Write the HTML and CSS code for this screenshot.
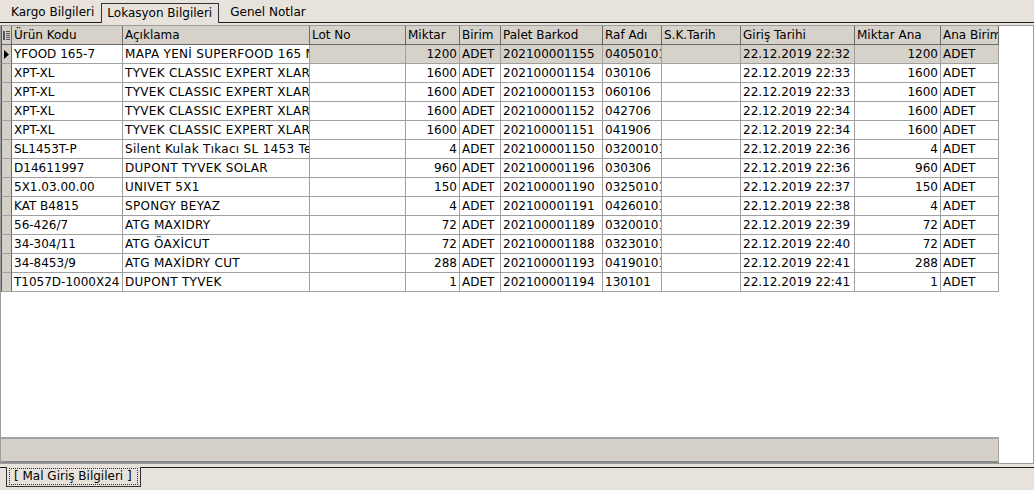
FILE: index.html
```html
<!DOCTYPE html>
<html lang="tr">
	<head>
	<meta charset="UTF-8" />
	<title>Lokasyon Bilgileri</title>
	<link rel="stylesheet" href="styles.css">
	</head>
	<body>
		<div class="tabs top">
			<span class="tab">Kargo Bilgileri</span>
			<span class="tab active">Lokasyon Bilgileri</span>
			<span class="tab">Genel Notlar</span>
		</div>
		<div class="grid">
			<table>
				<colgroup>
					<col style="width:11px"><col style="width:111px"><col style="width:187px"><col style="width:96px">
					<col style="width:54px"><col style="width:41px"><col style="width:102px"><col style="width:59px">
					<col style="width:79px"><col style="width:114px"><col style="width:86px"><col style="width:58px">
				</colgroup>
				<thead>
					<tr>
						<th class="ind">
							<svg width="7" height="9" viewBox="0 0 7 9"><rect x="0" y="0" width="2" height="9" fill="#555"/><path d="M3 0.5h4M3 2.5h4M3 4.5h4M3 6.5h4M3 8.5h4" stroke="#555" stroke-width="1"/></svg>
						</th>
						<th>Ürün Kodu</th><th>Açıklama</th><th>Lot No</th><th>Miktar</th><th>Birim</th><th>Palet Barkod</th><th>Raf Adı</th><th>S.K.Tarih</th><th>Giriş Tarihi</th><th>Miktar Ana</th><th>Ana Birim</th>
					</tr>
				</thead>
				<tbody>
					<tr class="current">
						<td class="ind"><svg width="5" height="9" viewBox="0 0 5 9"><polygon points="0,0 5,4.5 0,9" fill="#000"/></svg></td>
						<td class="w">YFOOD 165-7</td><td class="w desc">MAPA YENİ SUPERFOOD 165 MAVİ</td><td></td><td class="num">1200</td><td>ADET</td><td>202100001155</td><td>040501011</td><td></td><td>22.12.2019 22:32</td><td class="num">1200</td><td>ADET</td>
					</tr>
					<tr><td class="ind"></td><td>XPT-XL</td><td class="desc">TYVEK CLASSIC EXPERT XLARGE</td><td></td><td class="num">1600</td><td>ADET</td><td>202100001154</td><td>030106</td><td></td><td>22.12.2019 22:33</td><td class="num">1600</td><td>ADET</td></tr>
					<tr><td class="ind"></td><td>XPT-XL</td><td class="desc">TYVEK CLASSIC EXPERT XLARGE</td><td></td><td class="num">1600</td><td>ADET</td><td>202100001153</td><td>060106</td><td></td><td>22.12.2019 22:33</td><td class="num">1600</td><td>ADET</td></tr>
					<tr><td class="ind"></td><td>XPT-XL</td><td class="desc">TYVEK CLASSIC EXPERT XLARGE</td><td></td><td class="num">1600</td><td>ADET</td><td>202100001152</td><td>042706</td><td></td><td>22.12.2019 22:34</td><td class="num">1600</td><td>ADET</td></tr>
					<tr><td class="ind"></td><td>XPT-XL</td><td class="desc">TYVEK CLASSIC EXPERT XLARGE</td><td></td><td class="num">1600</td><td>ADET</td><td>202100001151</td><td>041906</td><td></td><td>22.12.2019 22:34</td><td class="num">1600</td><td>ADET</td></tr>
					<tr><td class="ind"></td><td>SL1453T-P</td><td class="desc">Silent Kulak Tıkacı SL 1453 Test</td><td></td><td class="num">4</td><td>ADET</td><td>202100001150</td><td>032001011</td><td></td><td>22.12.2019 22:36</td><td class="num">4</td><td>ADET</td></tr>
					<tr><td class="ind"></td><td>D14611997</td><td class="desc">DUPONT TYVEK SOLAR</td><td></td><td class="num">960</td><td>ADET</td><td>202100001196</td><td>030306</td><td></td><td>22.12.2019 22:36</td><td class="num">960</td><td>ADET</td></tr>
					<tr><td class="ind"></td><td>5X1.03.00.00</td><td class="desc">UNIVET 5X1</td><td></td><td class="num">150</td><td>ADET</td><td>202100001190</td><td>032501011</td><td></td><td>22.12.2019 22:37</td><td class="num">150</td><td>ADET</td></tr>
					<tr><td class="ind"></td><td>KAT B4815</td><td class="desc">SPONGY BEYAZ</td><td></td><td class="num">4</td><td>ADET</td><td>202100001191</td><td>042601011</td><td></td><td>22.12.2019 22:38</td><td class="num">4</td><td>ADET</td></tr>
					<tr><td class="ind"></td><td>56-426/7</td><td class="desc">ATG MAXIDRY</td><td></td><td class="num">72</td><td>ADET</td><td>202100001189</td><td>032001011</td><td></td><td>22.12.2019 22:39</td><td class="num">72</td><td>ADET</td></tr>
					<tr><td class="ind"></td><td>34-304/11</td><td class="desc">ATG ÖAXİCUT</td><td></td><td class="num">72</td><td>ADET</td><td>202100001188</td><td>032301011</td><td></td><td>22.12.2019 22:40</td><td class="num">72</td><td>ADET</td></tr>
					<tr><td class="ind"></td><td>34-8453/9</td><td class="desc">ATG MAXİDRY CUT</td><td></td><td class="num">288</td><td>ADET</td><td>202100001193</td><td>041901011</td><td></td><td>22.12.2019 22:41</td><td class="num">288</td><td>ADET</td></tr>
					<tr><td class="ind"></td><td>T1057D-1000X24</td><td class="desc">DUPONT TYVEK</td><td></td><td class="num">1</td><td>ADET</td><td>202100001194</td><td>130101</td><td></td><td>22.12.2019 22:41</td><td class="num">1</td><td>ADET</td></tr>
				</tbody>
			</table>
			<div class="filler"></div>
			<div class="footer">
				<div class="sumbar"></div>
			</div>
		</div>
		<div class="tabs bottom">
			<span class="tab active"><span class="focus">[ Mal Giriş Bilgileri ]</span></span>
		</div>
	</body>
</html>
```

FILE: styles.css
```css
* { box-sizing: border-box; }
html { font-family: "DejaVu Sans", Verdana, sans-serif; font-size: 12px; }
body { margin: 0; background-color: #e7e3dc; color: #000; width: 1034px; height: 490px; overflow: hidden; }

.tabs { display: flex; }
.tabs.top { height: 23px; align-items: flex-end; border-bottom: 1px solid #1e1e1e; padding-left: 5px; }
.tabs.top .tab { height: 19px; line-height: 18px; padding: 0 7px 0 6px; }
.tabs.top .tab.active { height: 20px; margin-bottom: -1px; border: 1px solid #333; border-bottom: none; background: #e7e3dc; padding: 0 6px 0 5px; }
.tabs.top .tab.active + .tab { padding-left: 11px; }

.grid { margin-top: 2px; height: 439px; background: #fff; border: 1px solid #9c9c9c; display: flex; flex-direction: column; }
.grid table { border-collapse: separate; border-spacing: 0; table-layout: fixed; width: 998px; }
.grid th, .grid td { height: 19px; padding: 0 2px; white-space: nowrap; overflow: hidden; text-align: left; font-weight: normal; border-right: 1px solid #a0a0a0; border-bottom: 1px solid #a0a0a0; line-height: 18px; }
.grid th { background: #d6d2ca; border-right-color: #6a6a6a; border-bottom-color: #6a6a6a; }
.grid td.num { text-align: right; }
.grid td.desc { letter-spacing: 0.3px; }
.grid .ind { padding: 0; background: #d4d0c8; border-right-color: #6a6a6a; border-left: 1px solid #555; text-align: center; }
.grid .ind svg { display: block; margin: 0 auto; }
.grid tr.current td { background: #d6d2ca; }
.grid tr.current td.w { background: #fff; }
.grid tr.current td.ind { background: #d4d0c8; }

.filler { flex: 1; }
.footer { height: 26px; display: flex; }
.sumbar { width: 998px; background: #d4d0c8; border-top: 2px solid #a3a3a3; border-bottom: 2px solid #8a8a8a; border-right: 1px solid #a3a3a3; }

.tabs.bottom { margin-top: 3px; border-top: 1px solid #1e1e1e; padding-left: 6px; }
.tabs.bottom .tab { height: 20px; margin-top: -1px; border: 1px solid #333; border-top: none; background: #e7e3dc; padding: 1px 2px; }
.tabs.bottom .focus { display: block; height: 17px; line-height: 15px; padding: 0 5px 0 4px; border: 1px dotted #333; }
```
